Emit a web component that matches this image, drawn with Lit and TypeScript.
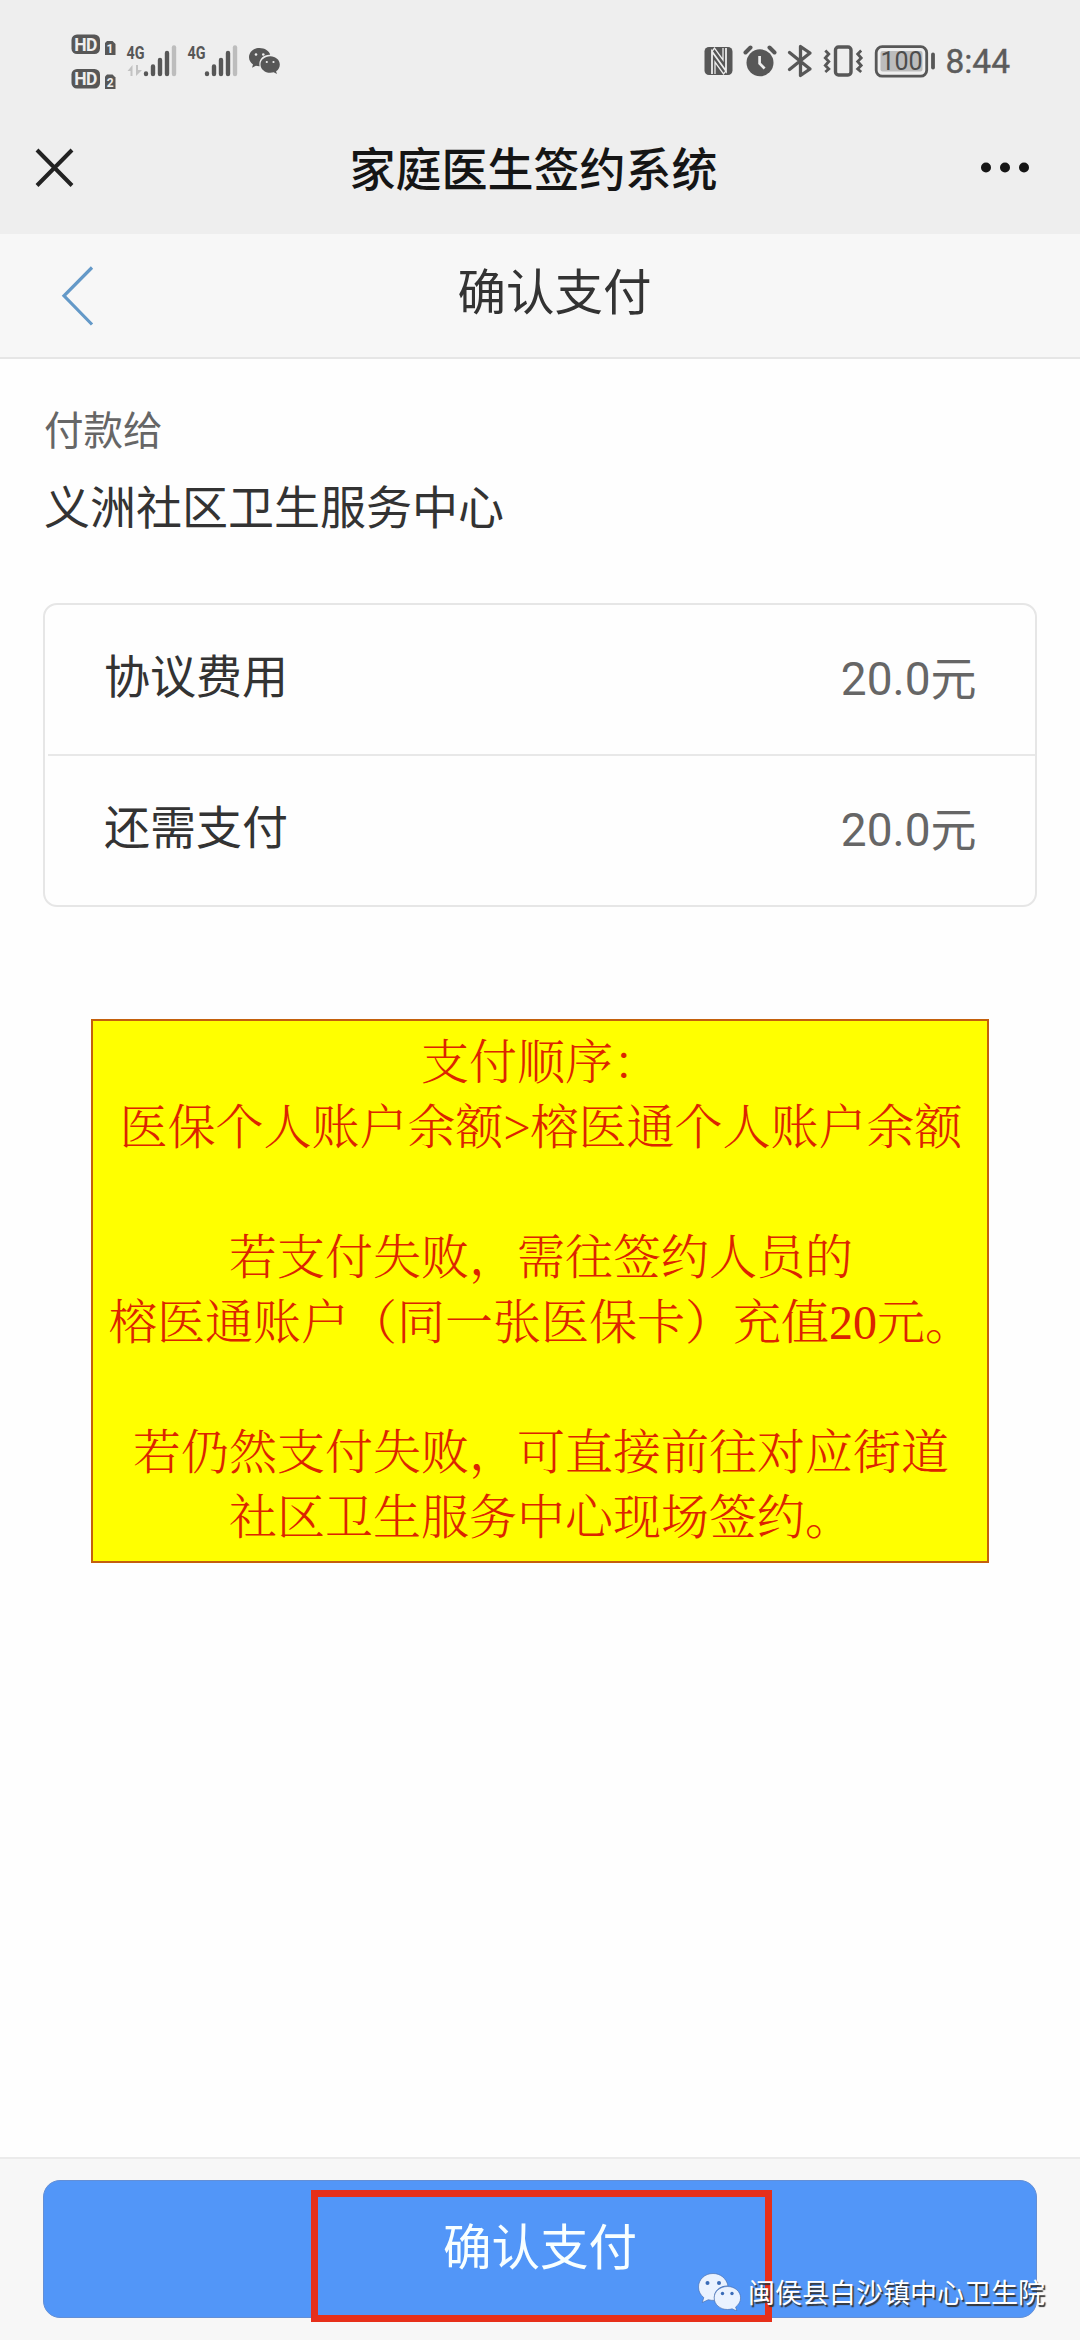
import { LitElement, html, css, svg } from "lit";
import { customElement, property } from "lit/decorators.js";

const bars = (x: number) => svg`
  <g stroke-width="4.4" stroke-linecap="round" stroke="#575757">
    <path d="M${x} 73.5v0.6M${x + 7} 66.500v7.500M${x + 14} 60v14M${x + 21} 53v21"/>
    <path stroke="#bdbdbd" d="M${x + 28} 47.500v26.500"/>
  </g>`;

@customElement("status-bar")
class StatusBar extends LitElement {
  static styles = css`
    :host {
      display: flex;
      justify-content: space-between;
      height: 100px;
      padding-right: 70px;
      color: #5c5c5c;
      font-family: Roboto, "Liberation Sans", sans-serif;
    }
    svg { display: block; flex: none; }
    .right { display: flex; }
    .time {
      margin-left: 8px;
      margin-top: 42px;
      font-size: 33.5px;
      line-height: 40px;
      -webkit-text-stroke: 0.4px #5c5c5c;
    }
    .b { font-weight: 700; }
  `;

  render() {
    return html`
      <svg width="300" height="100" viewBox="0 0 300 100" fill="#575757">
        <rect x="71.500" y="34.500" width="28.500" height="19.500" rx="5.500"/>
        <rect x="71.500" y="69" width="28.500" height="19.500" rx="5.500"/>
        <path d="M107 41h5.500l3 3v11h-10.500v-12z"/>
        <path d="M107 74.500h5.500l3 3v11.500h-10.500v-12.500z"/>
        <g fill="#eee" class="b" text-anchor="middle">
          <text x="85.800" y="50.500" font-size="17.500" textLength="23">HD</text>
          <text x="85.800" y="85" font-size="17.500" textLength="23">HD</text>
          <text x="110" y="53" font-size="12">1</text>
          <text x="110.200" y="87" font-size="12">2</text>
        </g>
        <g class="b" font-size="18.500">
          <text x="126.500" y="59" textLength="18" lengthAdjust="spacingAndGlyphs">4G</text>
          <text x="187.500" y="59" textLength="18" lengthAdjust="spacingAndGlyphs">4G</text>
        </g>
        <path d="M132.500 76v-11l-5 6h3v5zM136 65v11l6-6h-4v-5z" fill="#c2c2c2"/>
        ${bars(146)} ${bars(207)}
        <path d="M259.500 48c-6 0-10.500 4.200-10.500 9.300 0 3 1.600 5.500 4 7.100l-1 3.300 3.900-1.900c1.200.3 2.400.6 3.700.5-1.500-7 4-12 10.600-11.500-1-4-5.500-6.800-10.700-6.800z"/>
        <path d="M270.300 56.300c-5.500 0-9.800 3.600-9.800 8.200s4.300 8.300 9.800 8.300c1.200 0 2.300-.2 3.400-.5l3.200 1.800-.8-2.900c2.500-1.500 3.700-4 3.700-6.700 0-4.600-4.200-8.200-9.500-8.200z"/>
        <g fill="#eee"><circle cx="256" cy="54.500" r="1.300"/><circle cx="263.300" cy="54.500" r="1.300"/><circle cx="266.800" cy="62" r="1.100"/><circle cx="273.500" cy="62" r="1.100"/></g>
      </svg>
      <div class="right">
        <svg width="245" height="100" viewBox="691 0 245 100" fill="none" stroke="#575757">
          <rect x="703.500" y="47" width="28" height="28" rx="4.500" fill="#575757" stroke="none"/>
          <path d="M711 74V51.500L725 71V48" stroke="#eee" stroke-width="1.800"/>
          <path d="M711 51.500l2.500-3.500 8.500 12v-12M725 71l-2.500 3-8.500-12v12" stroke="#eee" stroke-width="1.300"/>
          <circle cx="759" cy="62.800" r="13.500" fill="#575757" stroke="none"/>
          <path d="M744.500 52.500l5-5M773.500 52.500l-5-5" stroke-width="4" stroke-linecap="round"/>
          <path d="M758.600 56v7.500l5 5" stroke="#eee" stroke-width="2.700"/>
          <path d="M788.500 52.500l20.500 16.500-9.500 6.500V46.500l9.500 6.500-20.500 16.500" stroke-width="3.300" stroke-linejoin="round" stroke-linecap="round"/>
          <rect x="834.500" y="47" width="15.500" height="28" rx="3" stroke-width="3.400"/>
          <path d="M824.300 50.500l3.500 3.500-3.500 4 3.500 3.500-3.500 4 3.500 3.500-3.500 3M860.200 50.500l-3.500 3.500 3.500 4-3.500 3.500 3.500 4-3.500 3.500 3.500 3" stroke-width="2.800"/>
          <rect x="875.200" y="46.700" width="50.500" height="29.500" rx="6" stroke-width="2.800"/>
          <rect x="879.500" y="51" width="42" height="20.500" rx="2" fill="#bcbcbc" stroke="none"/>
          <path d="M932 54.500v13" stroke-width="3.800" stroke-linecap="round"/>
          <text x="900.500" y="70" text-anchor="middle" font-size="25" textLength="42" fill="#4c4c4c" stroke="none">100</text>
        </svg>
        <span class="time">8:44</span>
      </div>`;
  }
}

@customElement("fee-row")
class FeeRow extends LitElement {
  @property() label = "";
  @property() amount = "";

  static styles = css`
    :host {
      display: flex;
      align-items: center;
      justify-content: space-between;
      height: 149px;
      padding: 0 58.500px 0 59px;
      font-size: 46px;
      line-height: 60px;
      color: #333;
    }
    .label { padding-bottom: 5px; }
    .amount { padding-bottom: 2px; color: #666; }
  `;

  render() {
    return html`<span class="label">${this.label}</span><span class="amount">${this.amount}</span>`;
  }
}

@customElement("app-root")
class AppRoot extends LitElement {
  static styles = css`
    :host {
      display: flex;
      flex-direction: column;
      width: 1080px;
      height: 2340px;
      background: #fefefe;
      color: #333;
      font-family: Roboto, "Noto Sans CJK SC", sans-serif;
      text-spacing-trim: space-all;
    }
    * { box-sizing: border-box; }
    svg { display: block; flex: none; }
    .chrome { height: 234px; background: #eee; }
    .nav {
      display: grid;
      grid-template-columns: 120px 1fr 120px;
      align-items: center;
      height: 136px;
    }
    .title {
      text-align: center;
      font-size: 46px;
      line-height: 60px;
      font-weight: 500;
      color: #151515;
      padding: 3px 13px 0 0;
    }
    .sub {
      display: grid;
      grid-template-columns: 120px 1fr 120px;
      align-items: center;
      height: 125px;
      background: #f7f7f7;
      border-bottom: 2px solid #e6e6e6;
    }
    .subtitle {
      text-align: center;
      font-size: 48.500px;
      line-height: 60px;
      padding-bottom: 4px;
      margin-left: 29px;
    }
    .main { flex: 1; padding: 48px 43px 0; }
    .hint { padding-left: 1px; font-size: 39.500px; line-height: 50px; color: #666; }
    .payee { padding-left: 1px; margin-top: 21px; font-size: 46px; line-height: 60px; }
    .card { margin-top: 65px; border: 2px solid #e6e6e6; border-radius: 14px; }
    .line { height: 2px; margin-left: 3px; background: #e8e8e8; }
    .notice {
      width: 898px;
      height: 544px;
      margin: 112px 0 0 48px;
      padding: 9px 0 0 2px;
      border: 2px solid #c4600c;
      background: #ff0;
      color: #dc2400;
      font-family: "Liberation Serif", "Noto Serif CJK SC", "Source Han Serif SC", SimSun, "Noto Sans CJK SC", serif;
      font-size: 48px;
      font-weight: 300;
      line-height: 65px;
      text-align: center;
      white-space: pre;
    }
    .footer {
      position: relative;
      height: 183px;
      padding: 21px 43px 0;
      background: #f7f7f7;
      border-top: 2px solid #ebebeb;
    }
    .pay {
      display: block;
      width: 994px;
      height: 138px;
      padding: 0;
      border: 1px solid #638fd6;
      border-radius: 17px;
      background: #5296f8;
      color: #f8ffff;
      font: 48.500px/60px Roboto, "Noto Sans CJK SC", sans-serif;
      text-align: center;
    }
    .mark {
      position: absolute;
      left: 311px;
      top: 31px;
      width: 461px;
      height: 132px;
      border: 7px solid #e62f1a;
    }
    .account {
      position: absolute;
      left: 698px;
      top: 110px;
      display: flex;
      align-items: center;
      gap: 6px;
      color: #fff;
      font-size: 27px;
      line-height: 40px;
      white-space: nowrap;
      text-shadow: 1.500px 1.500px 1px #333;
    }
    .name { padding-top: 5px; }
  `;

  render() {
    return html`
      <div class="chrome">
        <status-bar></status-bar>
        <div class="nav">
          <svg width="120" height="60" viewBox="0 0 120 60" stroke="#222" stroke-width="4"><path d="M37 30.500L72 66M72 30.500L37 66" transform="translate(0 -18.500)"/></svg>
          <div class="title">家庭医生签约系统</div>
          <svg width="120" height="60" viewBox="960 0 120 60" fill="#151515"><circle cx="986" cy="29.500" r="5"/><circle cx="1005" cy="29.500" r="5"/><circle cx="1024" cy="29.500" r="5"/></svg>
        </div>
      </div>
      <div class="sub">
        <svg width="120" height="80" viewBox="0 0 120 80" fill="none" stroke="#6499c8" stroke-width="3.200"><path d="M92 11.500L64 39.800L92 68.500"/></svg>
        <div class="subtitle">确认支付</div>
      </div>
      <div class="main">
        <div class="hint">付款给</div>
        <div class="payee">义洲社区卫生服务中心</div>
        <div class="card">
          <fee-row label="协议费用" amount="20.0元"></fee-row>
          <div class="line"></div>
          <fee-row label="还需支付" amount="20.0元"></fee-row>
        </div>
        <div class="notice">${[
          "支付顺序：",
          "医保个人账户余额>榕医通个人账户余额",
          "",
          "若支付失败，需往签约人员的",
          "榕医通账户（同一张医保卡）充值20元。",
          "",
          "若仍然支付失败，可直接前往对应街道",
          "社区卫生服务中心现场签约。",
        ].join("\n")}</div>
      </div>
      <div class="footer">
        <button class="pay">确认支付</button>
        <div class="mark"></div>
        <div class="account">
          <svg width="44" height="38" viewBox="0 0 44 38">
            <g fill="#eaf2ff" stroke="#3f67a8" stroke-width=".6">
              <path d="M15 .5C6.800.5.5 6.500.5 14c0 4.500 2 8 5.300 10.600L4.300 29.500l6-2.800c2.200.6 4.300.8 6.500.6C14.500 19 21 12.800 30 12.800 28.500 5.500 22.500.5 15 .5z"/>
              <path d="M29.500 13.500c-7.500 0-13.300 5-13.300 11.400 0 6.500 5.800 11.600 13.300 11.600 1.700 0 3.200-.3 4.600-.7l4.700 2.200-1.200-4c3-2.200 5-5.400 5-9.100 0-6.400-5.800-11.400-13.100-11.400z"/>
            </g>
            <g fill="#3b6cb8"><circle cx="9.500" cy="10" r="2"/><circle cx="21" cy="10" r="2"/><circle cx="24.500" cy="20.500" r="1.700"/><circle cx="34" cy="20.500" r="1.700"/></g>
          </svg>
          <span class="name">闽侯县白沙镇中心卫生院</span>
        </div>
      </div>`;
  }
}
